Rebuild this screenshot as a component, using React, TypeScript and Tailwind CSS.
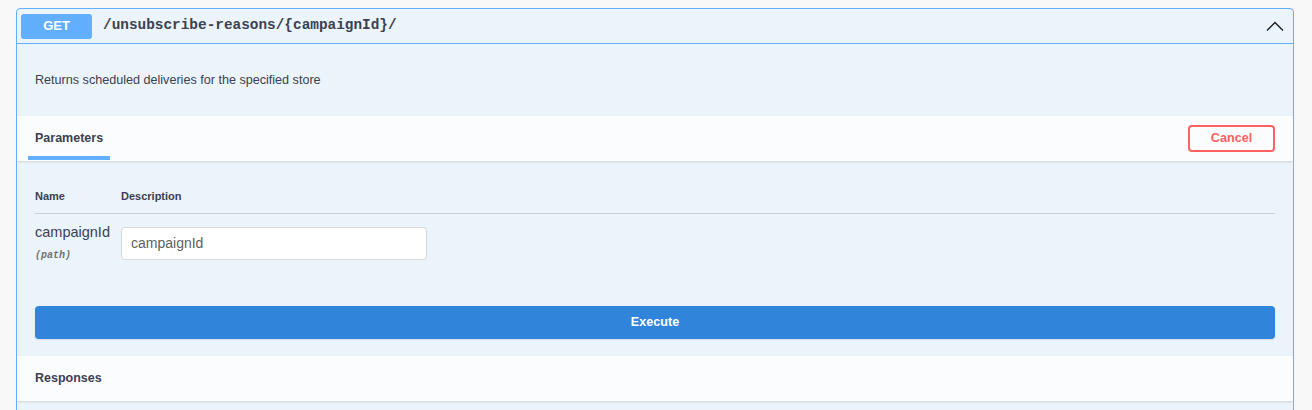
const sans = "font-['Liberation_Sans',Arial,sans-serif]"
const mono = "font-['Liberation_Mono','Courier_New',monospace]"

export default function App() {
  return (
    <div className={`min-h-[410px] bg-[#f8f8f8] pt-2 pl-4 ${sans} text-[#3b4151]`}>
      <div className="w-[1278px] border border-[#61affe] rounded-[4px] bg-[#ebf3fb] overflow-hidden">
        {/* summary */}
        <div className="h-[35px] flex items-center px-[4px] border-b border-[#61affe]">
          <span className="w-[71px] h-[25px] rounded-[3px] bg-[#61affe] text-white text-[13px] font-bold flex items-center justify-center">
            GET
          </span>
          <span className={`ml-[11px] ${mono} font-bold text-[14.4px] text-[#3b4151]`}>
            /unsubscribe-reasons/{'{campaignId}'}/
          </span>
          <svg className="ml-auto mr-[5px]" width="18" height="12" viewBox="0 0 18 12" fill="none">
            <path d="M1 10.5 L9 2.5 L17 10.5" stroke="#222" strokeWidth="1.5" />
          </svg>
        </div>

        {/* description */}
        <div className="h-[72px] flex items-center px-[18px]">
          <p className="text-[12.6px]">Returns scheduled deliveries for the specified store</p>
        </div>

        {/* parameters header */}
        <div className="h-[45px] bg-[#fafcfe] shadow-[0_1px_2px_rgba(0,0,0,0.12)] flex items-stretch justify-between pl-[11px] pr-[18px]">
          <div className="flex flex-col justify-end">
            <span className="px-[7px] text-[12.5px] font-bold leading-none mb-[12px]">Parameters</span>
            <div className="h-[4px] w-[82px] bg-[#61affe] mb-[1px]" />
          </div>
          <div className="flex items-center">
            <button className="w-[87px] h-[27px] border-2 border-[#ff6060] rounded-[4px] text-[#ff6060] text-[12.6px] font-bold bg-transparent">
              Cancel
            </button>
          </div>
        </div>

        {/* parameters table */}
        <div className="px-[18px] pt-[27px] pb-[16px]">
          <div className="flex text-[11px] font-bold pb-[8px] border-b border-[#b5bac3]/60">
            <span className="w-[86px]">Name</span>
            <span>Description</span>
          </div>
          <div className="flex pt-[9px]">
            <div className="w-[86px]">
              <div className="text-[14.5px] leading-[18px]">campaignId</div>
              <div className={`${mono} italic text-[10px] font-bold text-[#737373] mt-[7px]`}>(path)</div>
            </div>
            <input
              className="mt-[4px] w-[306px] h-[33px] bg-white border border-[#d9d9d9] rounded-[4px] px-[9px] text-[14px] outline-none placeholder:text-[#5f5f5f]"
              placeholder="campaignId"
            />
          </div>
        </div>

        {/* execute */}
        <div className="px-[18px] pt-[27px] pb-[17px]">
          <button className="w-full h-[33px] rounded-[4px] bg-[#3084d9] text-white text-[12.6px] font-bold shadow-[0_1px_2px_rgba(0,0,0,0.1)]">
            Execute
          </button>
        </div>

        {/* responses header */}
        <div className="h-[45px] bg-[#fafcfe] shadow-[0_1px_2px_rgba(0,0,0,0.12)] flex items-center px-[18px]">
          <span className="text-[12.5px] font-bold">Responses</span>
        </div>
        <div className="h-[20px]" />
      </div>
    </div>
  )
}
